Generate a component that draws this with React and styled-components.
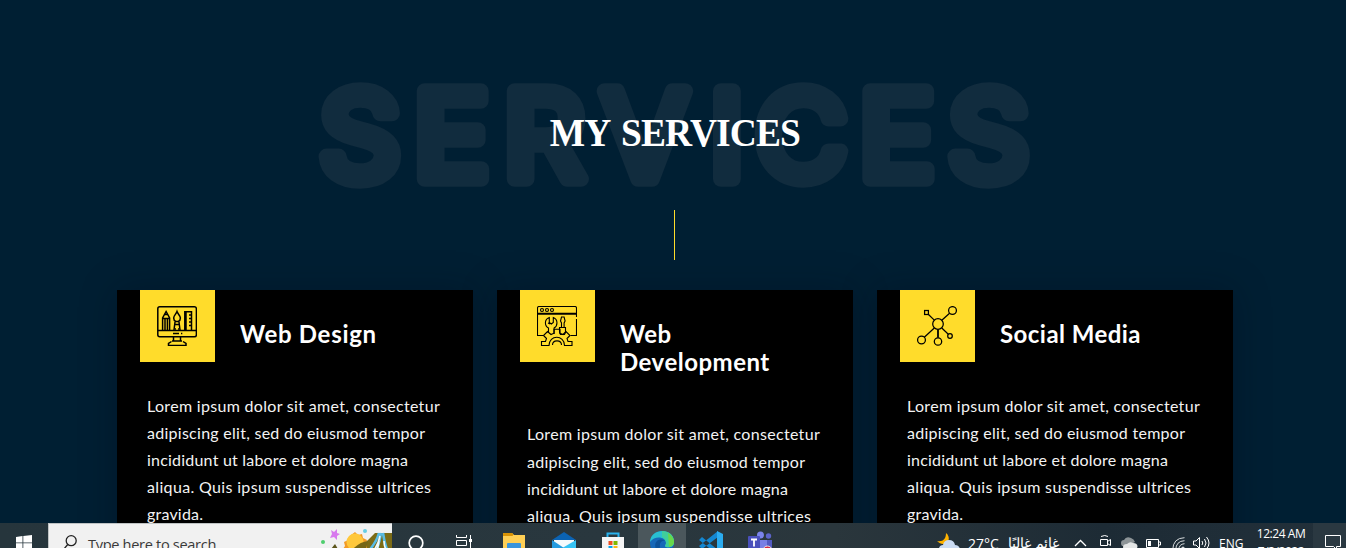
import React from 'react';
import styled, { createGlobalStyle } from 'styled-components';

const Global = createGlobalStyle`
  * { box-sizing: border-box; }
  html, body { margin: 0; padding: 0; background: #001f33; overflow: hidden; }
  h2, h3, p { margin: 0; }
  svg { display: block; flex: none; }
`;

const Screen = styled.div`
  display: flex;
  flex-direction: column;
  width: 1346px;
  height: 548px;
  overflow: hidden;
`;

const Services = styled.section`
  height: 523px;
  flex: none;
  overflow: hidden;
  padding: 60px 113px 0 117px;
  background: #001f33;
  font-family: Lato, sans-serif;
  color: #fff;
`;

const Heading = styled.header`
  display: grid;
  justify-items: center;
  height: 150px;
  > * { grid-area: 1 / 1; }
`;

const Backdrop = styled.svg`
  overflow: visible;
  text {
    font: 400 121px Inter, sans-serif;
    fill: #112c3e;
    stroke: #112c3e;
    stroke-width: 15.5px;
    stroke-linejoin: round;
  }
`;

const Title = styled.h2`
  position: relative;
  padding-top: 48px;
  font: 700 41px/48px "Liberation Serif", serif;
  letter-spacing: -1px;
  word-spacing: 4px;
  white-space: nowrap;
  transform: scaleX(0.914);
`;

const Rule = styled.div`
  width: 1px;
  height: 50px;
  margin: 0 0 30px 557px;
  background: #ffdc2b;
`;

const Cards = styled.div`
  display: grid;
  grid-template-columns: repeat(3, 356px);
  column-gap: 24px;
`;

const Card = styled.article`
  height: 300px;
  padding: 0 30px 0 23px;
  background: #000;
  box-shadow: 0 0 35px rgba(4, 9, 20, 0.25);
`;

const CardHead = styled.div`
  display: flex;
  gap: 25px;
`;

const Tile = styled.div`
  display: flex;
  flex: none;
  width: 75px;
  height: 72px;
  padding: 16px 0 0 17px;
  background: #ffdc2b;
`;

const CardTitle = styled.h3`
  padding-top: 30px;
  width: 190px;
  font: 700 24px/28px Lato, sans-serif;
  letter-spacing: ${(p) => p.$tracking};
`;

const CardText = styled.p`
  margin-top: ${(p) => p.$top};
  padding-left: 7px;
  font-size: 16px;
  line-height: 27.2px;
  color: #f3f3f3;
  white-space: nowrap;
`;

const Line = styled.span`
  display: block;
  letter-spacing: ${(p) => p.$tracking};
`;

const Taskbar = styled.footer`
  display: flex;
  flex: none;
  height: 40px;
  background: linear-gradient(90deg, #26353c, #29373e 45%, #2a363c 62%, #1d2b35 82%, #22303a);
  color: #fff;
  font-family: "Open Sans", "Noto Sans", sans-serif;
`;

const TaskButton = styled.div`
  display: flex;
  align-items: center;
  justify-content: center;
  flex: none;
  width: ${(p) => p.$w || 49}px;
  height: 40px;
  background: ${(p) => (p.$active ? '#4b575c' : 'transparent')};
`;

const Search = styled.div`
  display: flex;
  align-items: center;
  flex: none;
  width: 344px;
  padding-left: 14px;
  background: #f1f1f1;
  border-top: 1px solid #bfc3c4;
  border-left: 1px solid #bfc3c4;
  color: #3a3a3a;
  font-size: 14.6px;
  overflow: hidden;
`;

const SearchLabel = styled.span`
  margin-left: 10px;
  width: 232px;
  white-space: nowrap;
  letter-spacing: -0.33px;
`;

const Tray = styled.div`
  display: flex;
  align-items: center;
  margin-left: auto;
`;

const TrayItem = styled.div`
  display: flex;
  flex: none;
  width: ${(p) => p.$w}px;
  margin-right: ${(p) => p.$gap || 0}px;
  white-space: nowrap;
  font-size: ${(p) => p.$size || 12}px;
`;

const Clock = styled.div`
  width: 67px;
  height: 40px;
  padding: 2px 0 0 3px;
  flex: none;
  text-align: center;
  font-size: 12px;
  line-height: 18px;
  letter-spacing: -0.45px;
  white-space: nowrap;
`;

const Notify = styled.div`
  display: flex;
  align-items: center;
  justify-content: center;
  width: 33px;
  height: 40px;
  padding-left: 7px;
  flex: none;
  background: #2a3841;
`;

const DesignIcon = () => (
  <svg width="40" height="40" viewBox="0 0 40 40" fill="none" stroke="#000" strokeWidth="1.5">
    <rect x="0.8" y="0.8" width="38.6" height="30" rx="2" />
    <path d="M1 24.5h38M16.5 31v4.5M23.5 31v4.5M15 35h10M14.5 35.5l-3 2v2h17.500v-2l-3-2M16 27.5h6M24 27.500h1.300" />
    <path d="M5.600 24V12l3.500-6.500 3.500 6.500v12M5.600 12.500h7M8 13v11M10.400 13v11M8 8.500h2.500" />
    <path d="M20 5.500c-1 3-3.300 4-3.300 6.500 0 1.500 1 3 2 3.500h2.700c1-.5 2-2 2-3.500 0-2.500-2.400-3.500-3.400-6.500zM18 16l-1 8M22 16l1 8M18 18.500h4M18 23h1M21 23h1" />
    <path d="M27.800 24V5.800h6.700V24M34 9h-2M34 12.500h-2M34 16h-2M34 19.500h-2M29 5.800V24" />
  </svg>
);

const DevelopmentIcon = () => (
  <svg width="40" height="40" viewBox="0 0 40 40" fill="none" stroke="#000" strokeWidth="1.100">
    <path d="M6.500 29.500H.5V2Q.5.500 2 .500h36Q39.500.500 39.500 2v9M39.500 13v16.500h-6" />
    <path d="M1 7.700h38" strokeWidth="2" />
    <circle cx="5" cy="4" r="1.500" /><circle cx="10" cy="4" r="1.500" /><circle cx="15" cy="4" r="1.500" />
    <path d="M11.500 26v-4c-4-2-4.500-8.500.8-10.500v5l2 1.500 2-1.500v-5c5 2 4.500 8.500.8 10.500v6M11 17l2 1" />
    <path d="M24.500 21v-4l-1-2 1-4h2.600l1 4-1 2v4M22.500 21.500h6v4c0 1.500-1 3-1 3h-4s-1-1.500-1-3z" />
    <path d="M4.500 39.500v-4h4l1-3-3-3 4-4 3.500 3 3-1.300v-4h6v4l3 1.300 3-3 4 4-3 3 1 3h4v4h-7.500c0-11-15.500-11-15.500 0z" />
    <path d="M15.500 39c0-5.500 9-5.500 9 0" />
  </svg>
);

const SocialIcon = () => (
  <svg width="40" height="40" viewBox="0 0 40 40" fill="none" stroke="#000" strokeWidth="1.250">
    <circle cx="21" cy="18" r="5.300" />
    <circle cx="35.500" cy="4.500" r="3.900" />
    <rect x="7.600" y="4.500" width="3.800" height="4" />
    <circle cx="4.500" cy="34" r="3.900" />
    <circle cx="21" cy="35.500" r="3.700" />
    <circle cx="33" cy="30" r="2.300" />
    <path d="M11.500 8.500l5.800 5.600M24.800 14.200l7.800-7M17.300 22L7.300 31.200M24.800 22l6.500 6.300" />
    <path d="M21 23.500v8.300" strokeWidth="1.800" />
  </svg>
);

const LINES = [
  ['Lorem ipsum dolor sit amet, consectetur', '0.31px'],
  ['adipiscing elit, sed do eiusmod tempor', '0.27px'],
  ['incididunt ut labore et dolore magna', '0.21px'],
  ['aliqua. Quis ipsum suspendisse ultrices', '0.34px'],
  ['gravida.', '0.2px'],
];

const SERVICES = [
  { title: 'Web Design', tracking: '0.7px', top: '29.5px', Icon: DesignIcon },
  { title: 'Web Development', tracking: '0.5px', top: '44.4px', Icon: DevelopmentIcon },
  { title: 'Social Media', tracking: '0.45px', top: '29.5px', Icon: SocialIcon },
];

const SearchArt = () => (
  <svg width="72" height="38" viewBox="0 0 72 38">
    <path d="M11 5l3 2 3-3v4l3 1-3 2v4l-3-3-4 1 2-4z" fill="#d879ee" />
    <circle cx="3" cy="17" r="2" fill="#4fce6e" />
    <path d="M15 19l3 5v5h-7v-5z" fill="#5b551b" />
    <path d="M28 37q8-11 20-22l7-7h17v30H28z" fill="#7b6b16" />
    <path d="M35 7l3 3 4-1 1 4 4 2-1 4 1 4-4 2-2 4-16-1-2-4 2-3-1-4 4-2 2-4z" fill="#f29b26" />
    <circle cx="35" cy="17" r="8.500" fill="#ffc83b" />
    <path d="M27 31q10-14 21-15l-6 22H25z" fill="#766615" />
    <circle cx="45" cy="6" r="2" fill="#66cde4" />
    <path d="M59 8q-3 11-14 22M61 8q-2 13-8 26M63 8q2 15 8 25" stroke="#58bce6" strokeWidth="2.600" fill="none" />
    <path d="M60 11q-2 11-11 20M64 16q0 8 6 15M59 16q-1 8-4 13" stroke="#f4fbfa" strokeWidth="1.600" fill="none" />
  </svg>
);

const StartIcon = () => (
  <svg width="16" height="16" viewBox="0 0 16 16" fill="#fff">
    <path d="M0 2l6.500-1v6.500H0zM7.300.900L16 0v7.500H7.300zM0 8.300h6.500V15L0 14zM7.300 8.300H16V16l-8.700-1z" />
  </svg>
);
const SearchIcon = () => (
  <svg width="15" height="17" viewBox="0 0 15 17" fill="none" stroke="#222" strokeWidth="1.300">
    <circle cx="8.200" cy="5.700" r="5" /><path d="M4.700 9.500L0 15.200" />
  </svg>
);
const CortanaIcon = () => (
  <svg width="16" height="16" viewBox="0 0 16 16"><circle cx="8" cy="8" r="6.800" fill="none" stroke="#fff" strokeWidth="1.700" /></svg>
);
const TaskViewIcon = () => (
  <svg width="18" height="16" viewBox="0 0 18 16" fill="none" stroke="#fff">
    <path d="M1.500 0v2.500h10V0M1.500 5.500h10v5h-10zM1.500 16v-2.500h10V16M15.500 0v16" /><path d="M14 4h3v3h-3z" fill="#fff" stroke="none" />
  </svg>
);
const ExplorerIcon = () => (
  <svg width="22" height="20" viewBox="0 0 22 20">
    <path d="M0 1Q0 0 1 0h8l2 2h11v17H0z" fill="#ffcf55" /><path d="M0 0h9l1.500 1.500-1 1.500H0z" fill="#d99305" />
    <path d="M5 10h12q1 0 1 1v8h-4v-4H8v4H4v-8q0-1 1-1z" fill="#3a94dc" />
  </svg>
);
const MailIcon = () => (
  <svg width="24" height="22" viewBox="0 0 24 22">
    <path d="M0 8l12-8 12 8z" fill="#0b63b3" /><path d="M2 8h20v12H2z" fill="#f5fafc" />
    <path d="M0 8l12 8L0 22z" fill="#249be0" /><path d="M24 8v14H0z" fill="#36c3f4" />
  </svg>
);
const StoreIcon = () => (
  <svg width="24" height="24" viewBox="0 0 24 24">
    <path d="M6.500 7V2.500h11V7" fill="none" stroke="#29b2ed" strokeWidth="2" /><path d="M1 6h22v15q0 3-3 3H4q-3 0-3-3z" fill="#f5f5f5" />
    <path d="M7.500 10h4v4h-4z" fill="#ee5022" /><path d="M12.500 10h4v4h-4z" fill="#7fb900" /><path d="M7.500 15h4v4h-4z" fill="#05a4ef" /><path d="M12.500 15h4v4h-4z" fill="#fdb813" />
  </svg>
);
const EdgeIcon = () => (
  <svg width="24" height="24" viewBox="0 0 24 24">
    <circle cx="12" cy="12" r="12" fill="#1768b8" />
    <path d="M0 11C1-4 24-3 24 11c0 5-5 6-8 5-2-1 0-2 0-4 0-6-11-8-16-1z" fill="#29bfd1" />
    <path d="M12 0c8 0 12 5 12 11 0 5-5 6-8 5-2-1 0-2 0-4 0-3-2-5-4-6z" fill="#40ce9b" />
    <path d="M18 2q6 4 6 9 0 4-5 5z" fill="#68d84a" />
    <path d="M10 16c-1-4 2-7 5-6-2-2-6-2-8 0-3 3-2 8 1 11z" fill="#0d529a" />
  </svg>
);
const CodeIcon = () => (
  <svg width="24" height="24" viewBox="0 0 24 24">
    <path d="M0 9l3-3 16 13v5zM0 15l3 3L19 6V0z" fill="#1487d1" /><path d="M18 0l6 3v18l-6 3z" fill="#2bacf0" />
  </svg>
);
const TeamsIcon = () => (
  <svg width="26" height="24" viewBox="0 0 26 24">
    <circle cx="13.500" cy="4" r="3.500" fill="#7b83eb" /><circle cx="21.500" cy="5" r="2.700" fill="#5c64c9" />
    <path d="M18 9h7v10h-7z" fill="#535bc2" /><path d="M8 9h12v14H8z" fill="#7880e5" />
    <rect x="1" y="5" width="12" height="13" rx="1" fill="#4a50bb" />
    <path d="M4 8.500h6M7 8.500v7" stroke="#fff" strokeWidth="1.800" />
    <circle cx="20.500" cy="19.500" r="4.500" fill="#d52a43" stroke="#e8e8e8" />
  </svg>
);
const WeatherIcon = () => (
  <svg width="23" height="22" viewBox="0 0 23 22">
    <path d="M9 1c5 4 3 11-3 11-2 0-4-1-6-3 6 1 9-2 9-8z" fill="#ffb300" />
    <path d="M4 21q-3-1-2-5 1-3 4-3 1-5 6-5t6 5q4 0 5 4 0 4-4 4z" fill="#cbdcf4" />
  </svg>
);
const ChevronIcon = () => (
  <svg width="13" height="8" viewBox="0 0 13 8"><path d="M1 7l5.500-5.500L12 7" fill="none" stroke="#fff" strokeWidth="1.300" /></svg>
);
const CameraIcon = () => (
  <svg width="13" height="16" viewBox="0 0 13 16" fill="none" stroke="#fff">
    <path d="M2 1.500q4-2 7 0M1.500 4.500h7v6h-7zM8.500 6.500l3-2v6l-3-2M2 14.500q4 2 7 0" />
  </svg>
);
const CloudIcon = () => (
  <svg width="17" height="12" viewBox="0 0 17 12">
    <path d="M0 6q0-3 3-3 2-4 7-2 3 1 4 4l-7 4H1Q0 8 0 6z" fill="#8d9497" /><path d="M2 10q0-3 4-3 3-3 6-1 4 0 4.500 3 0 3-3 3H5q-3 0-3-2z" fill="#e4e6e6" />
  </svg>
);
const BatteryIcon = () => (
  <svg width="15" height="9" viewBox="0 0 15 9"><path d="M.5.500h12v8H.5zM12.500 3h2v3h-2" fill="none" stroke="#fff" /><path d="M2 2h3v5H2z" fill="#fff" /></svg>
);
const WifiIcon = () => (
  <svg width="13" height="13" viewBox="0 0 13 13" fill="none" stroke="#d7dbdd">
    <path d="M.7 13Q1 1 12.500.700M3.700 13Q4 4 12.500 3.700M6.700 13Q7 7 12.500 6.700" /><circle cx="11" cy="11.500" r="1.400" fill="#fff" />
  </svg>
);
const SpeakerIcon = () => (
  <svg width="17" height="14" viewBox="0 0 17 14" fill="none" stroke="#fff">
    <path d="M.5 5h2.500l3.500-3.500v11L3 9H.5zM9 5q1.500 2 0 4M11.500 3q3 4 0 8M13.500 1q5 6 0 12" />
  </svg>
);
const NotifyIcon = () => (
  <svg width="17" height="16" viewBox="0 0 17 16" fill="none" stroke="#fff"><path d="M.5.500h15v11h-4v3l-3-3h-8z" /></svg>
);

const APPS = [
  { Icon: CortanaIcon, w: 48 },
  { Icon: TaskViewIcon, w: 48 },
  { Icon: ExplorerIcon, w: 52 },
  { Icon: MailIcon, w: 48 },
  { Icon: StoreIcon, w: 50 },
  { Icon: EdgeIcon, w: 48, active: true },
  { Icon: CodeIcon, w: 50 },
  { Icon: TeamsIcon, w: 48 },
];

export default function App() {
  return (
    <Screen>
      <Global />
      <Services>
        <Heading>
          <Backdrop width="716" height="130" viewBox="0 0 716 130">
            <text transform="scale(1.04 1)" x="2.500 93 179.500 273.500 378 421.500 521.500 607" y="119">SERVICES</text>
          </Backdrop>
          <Title>MY SERVICES</Title>
        </Heading>
        <Rule />
        <Cards>
          {SERVICES.map(({ title, tracking, top, Icon }) => (
            <Card key={title}>
              <CardHead>
                <Tile><Icon /></Tile>
                <CardTitle $tracking={tracking}>{title}</CardTitle>
              </CardHead>
              <CardText $top={top}>
                {LINES.map(([text, space]) => <Line key={text} $tracking={space}>{text}</Line>)}
              </CardText>
            </Card>
          ))}
        </Cards>
      </Services>
      <Taskbar>
        <TaskButton $w={48}><StartIcon /></TaskButton>
        <Search>
          <SearchIcon />
          <SearchLabel>Type here to search</SearchLabel>
          <SearchArt />
        </Search>
        {APPS.map(({ Icon, w, active }, i) => (
          <TaskButton key={i} $w={w} $active={active}><Icon /></TaskButton>
        ))}
        <Tray>
          <TrayItem $w={31}><WeatherIcon /></TrayItem>
          <TrayItem $w={38} $size={14}>27°C</TrayItem>
          <TrayItem $w={53} $gap={15} $size={13.5} dir="rtl">غائم غالبًا</TrayItem>
          <TrayItem $w={25}><ChevronIcon /></TrayItem>
          <TrayItem $w={22}><CameraIcon /></TrayItem>
          <TrayItem $w={25}><CloudIcon /></TrayItem>
          <TrayItem $w={26}><BatteryIcon /></TrayItem>
          <TrayItem $w={21}><WifiIcon /></TrayItem>
          <TrayItem $w={26}><SpeakerIcon /></TrayItem>
          <TrayItem $w={27}>ENG</TrayItem>
          <Clock>12:24 AM<br />7/3/2022</Clock>
          <Notify><NotifyIcon /></Notify>
        </Tray>
      </Taskbar>
    </Screen>
  );
}
